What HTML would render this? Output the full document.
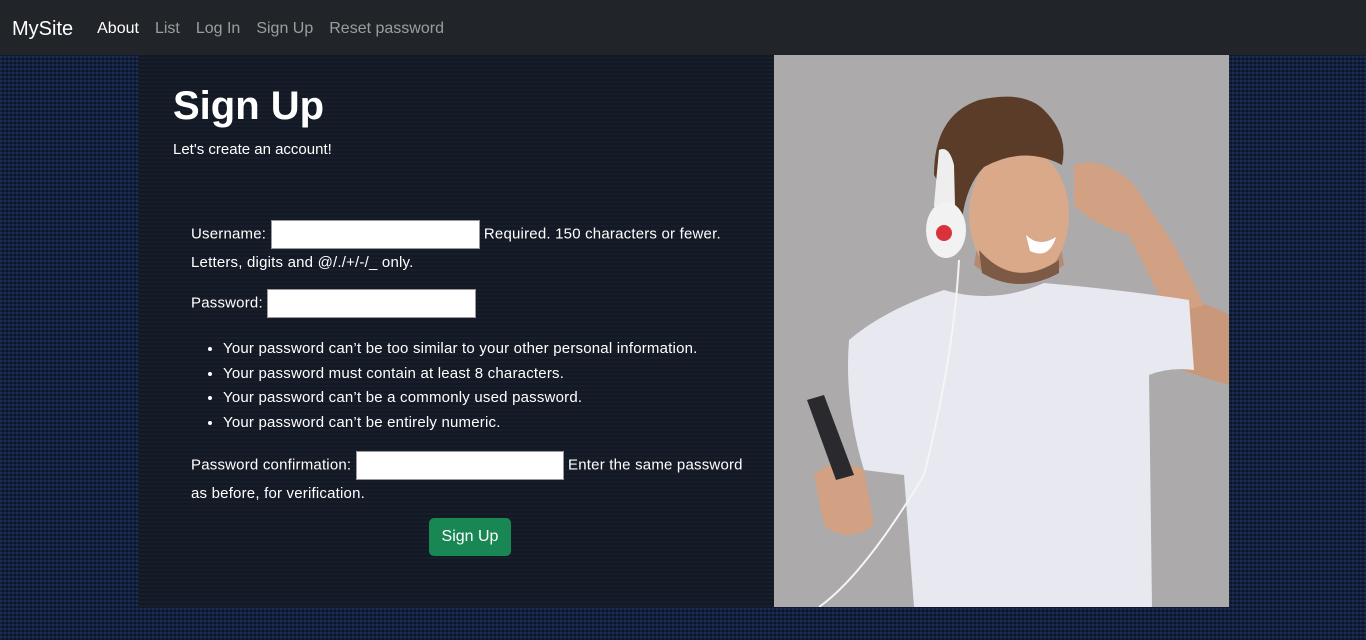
<!DOCTYPE html>
<html><head><meta charset="utf-8"><style>
*{box-sizing:border-box;margin:0;padding:0}
body{width:1366px;height:640px;overflow:hidden;font-family:"Segoe UI","Liberation Sans",sans-serif;color:#fff;
background-color:#14223f;
background-image:repeating-linear-gradient(0deg,rgba(0,0,0,.35) 0 2px,transparent 2px 4px),repeating-linear-gradient(90deg,rgba(40,70,130,.35) 0 2px,transparent 2px 4px);}
nav{height:55px;background:#212529;display:flex;align-items:center;padding-left:12px;font-size:16px;padding-top:3px}
nav .brand{font-size:20px;color:#fff;margin-right:24px}
nav a{color:rgba(255,255,255,.55);margin-right:16px;text-decoration:none}
nav a.act{color:#fff}
.panel{position:absolute;left:138px;top:55px;width:636px;height:552px;background:#131825;
background-image:repeating-linear-gradient(0deg,rgba(255,255,255,.025) 0 2px,transparent 2px 4px)}
h1{position:absolute;left:35px;top:29px;font-size:40px;font-weight:bold}
.sub{position:absolute;left:35px;top:86px;font-size:15px}
.form{position:absolute;left:53px;top:165px;width:570px;font-size:15px;line-height:27px;letter-spacing:.2px}
input{width:209px;height:29px;border:1px solid #999;background:#fff;vertical-align:middle;}
ul{margin:19px 0 16px 32px;line-height:24.5px}
.btn{position:absolute;left:291px;top:463px;width:82px;height:38px;background:#198754;border-radius:5px;text-align:center;line-height:38px;font-size:16px}
.img{position:absolute;left:774px;top:55px;width:455px;height:552px;background:#aeabab}
</style></head><body>
<nav><span class="brand">MySite</span><a class="act">About</a><a>List</a><a>Log In</a><a>Sign Up</a><a>Reset password</a></nav>
<div class="panel">
<h1>Sign Up</h1>
<div class="sub">Let's create an account!</div>
<div class="form">
<div>Username: <input> Required. 150 characters or fewer. Letters, digits and @/./+/-/_ only.</div>
<div style="margin-top:13px">Password: <input></div>
<ul><li>Your password can’t be too similar to your other personal information.</li><li>Your password must contain at least 8 characters.</li><li>Your password can’t be a commonly used password.</li><li>Your password can’t be entirely numeric.</li></ul>
<div style="width:560px">Password confirmation: <input style="width:208px"> Enter the same password as before, for verification.</div>
</div>
<div class="btn">Sign Up</div>
</div>
<div class="img"><svg width="455" height="552" viewBox="0 0 455 552">
<rect width="455" height="552" fill="#acaaaa"/>
<path d="M390 250 Q420 240 455 260 L455 330 Q420 320 395 310 Z" fill="#c9977a"/>
<path d="M300 110 Q330 100 360 130 Q380 160 400 190 L430 250 L395 260 L355 180 Q320 170 300 150 Z" fill="#d2a184"/>
<path d="M75 285 Q110 255 170 235 Q220 250 270 228 Q350 235 415 245 L420 315 Q395 312 375 320 L378 552 L140 552 L130 420 L90 415 Q70 350 75 285 Z" fill="#e8e8f0"/>
<path d="M200 210 Q245 245 290 210 L285 180 L205 180 Z" fill="#b58a70"/>
<ellipse cx="245" cy="160" rx="50" ry="68" fill="#d9a98a"/>
<path d="M205 195 Q240 235 285 205 L285 218 Q245 240 208 218 Z" fill="#7d5a45"/>
<path d="M160 120 Q160 60 205 45 Q250 35 270 55 Q295 80 288 110 Q250 90 210 112 Q192 130 188 165 Z" fill="#5a3c28"/>
<path d="M165 95 Q175 90 180 110 L182 190 Q165 185 160 150 Z" fill="#eee"/>
<ellipse cx="172" cy="175" rx="20" ry="28" fill="#f2f2f2"/>
<circle cx="170" cy="178" r="8" fill="#d8323c"/>
<path d="M252 180 Q265 193 282 182 Q275 205 256 196Z" fill="#fff"/>
<path d="M40 420 Q60 400 90 415 L100 470 Q75 490 50 470 Z" fill="#d2a184"/>
<path d="M33 345 L50 340 L80 420 L62 425 Z" fill="#2a2a2e"/>
<path d="M185 205 Q180 300 150 420 Q90 520 45 552" stroke="#f5f5f5" stroke-width="2" fill="none"/>
</svg></div>
</body></html>
